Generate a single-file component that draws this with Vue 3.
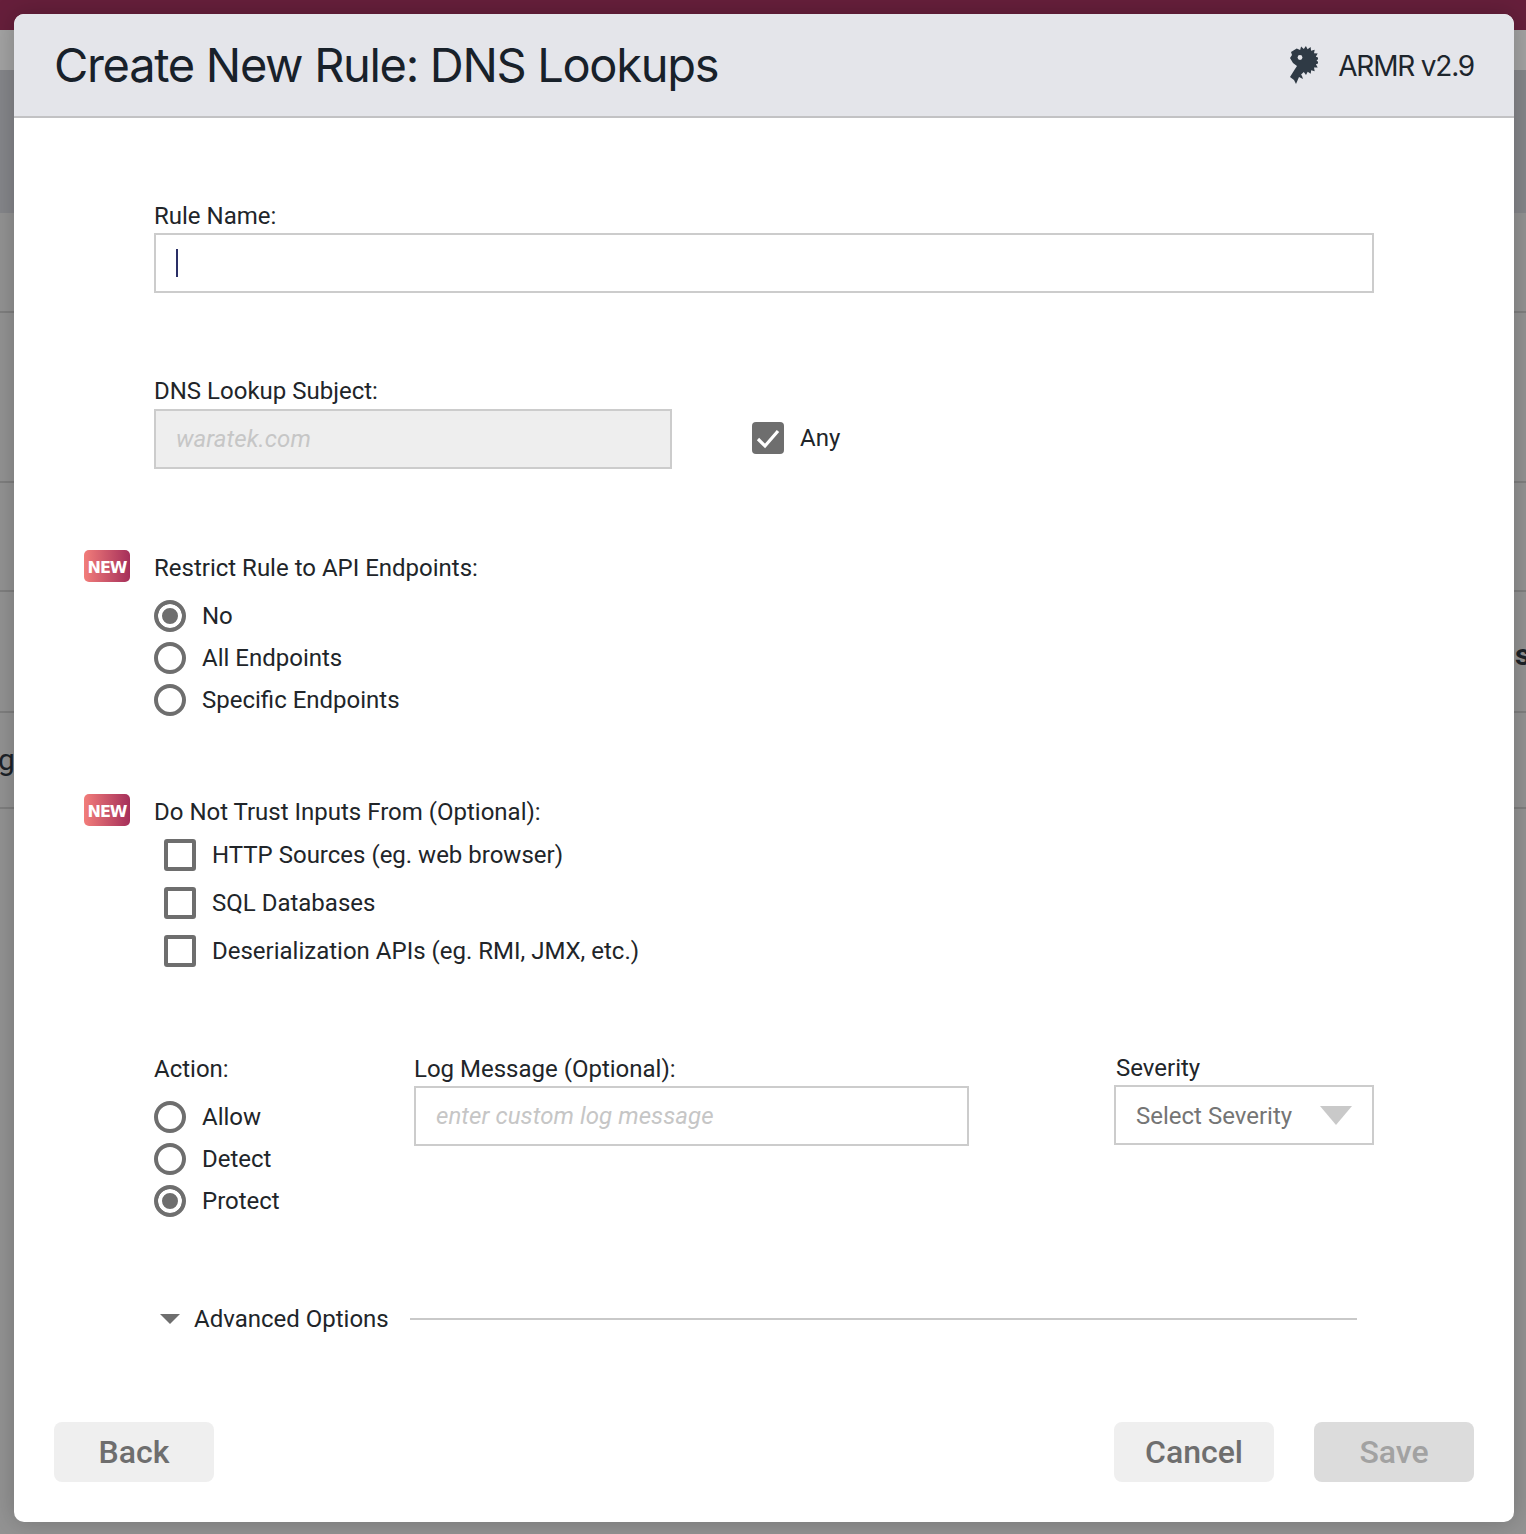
<script setup>
const endpointOptions = [
  { label: 'No', checked: true },
  { label: 'All Endpoints', checked: false },
  { label: 'Specific Endpoints', checked: false }
]
const trustOptions = [
  'HTTP Sources (eg. web browser)',
  'SQL Databases',
  'Deserialization APIs (eg. RMI, JMX, etc.)'
]
const actionOptions = [
  { label: 'Allow', checked: false },
  { label: 'Detect', checked: false },
  { label: 'Protect', checked: true }
]
const backdropLines = [311, 481, 590, 711, 807]

// jagged mane of the logo: spikes round the head, then the tail by hand
const logoPoints = []
for (let i = 0; i <= 24; i++) {
  const angle = ((-125 + i * 9.6) * Math.PI) / 180
  const r = i % 2 === 0 ? 14.5 : 11.5
  logoPoints.push([15 + r * Math.cos(angle), 14.5 + r * Math.sin(angle)])
}
const logoPath = logoPoints
  .concat([[12, 30], [13, 33], [9, 31], [6, 38], [4, 34], [0, 31], [5, 23], [7, 20], [3, 17], [0, 12], [2, 9], [1, 6]])
  .map(p => p[0].toFixed(1) + ',' + p[1].toFixed(1))
  .join(' ')
</script>

<template>
  <div class="page">
    <div class="backdrop">
      <div class="band"></div>
      <div class="strip"></div>
      <div class="strip-dark"></div>
      <div v-for="y in backdropLines" :key="y" class="backdrop-line" :style="{ top: y + 'px' }"></div>
      <span class="stray stray-g">g</span>
      <span class="stray stray-s">s</span>
    </div>

    <div class="modal">
      <header class="modal-header">
        <h1>Create New Rule: DNS Lookups</h1>
        <div class="brand">
          <svg class="logo" width="28" height="38" viewBox="0 0 28 38">
            <polygon fill="#2f3a45" :points="logoPath" />
            <circle cx="10" cy="11.5" r="2.4" fill="#e4e5ea" />
          </svg>
          <span class="version">ARMR v2.9</span>
        </div>
      </header>

      <main class="modal-body">
        <section class="rule-name">
          <label class="field-label">Rule Name:</label>
          <div class="text-field name-field"><span class="caret"></span></div>
        </section>

        <section class="subject">
          <label class="field-label">DNS Lookup Subject:</label>
          <div class="subject-row">
            <input class="text-field subject-field" disabled placeholder="waratek.com" />
            <span class="check checked">
              <svg width="32" height="32" viewBox="0 0 32 32">
                <path d="M6 17l7 7L26 9" fill="none" stroke="#fff" stroke-width="3.2" />
              </svg>
            </span>
            <span class="option-text any">Any</span>
          </div>
        </section>

        <section class="endpoints">
          <span class="new-badge">NEW</span>
          <label class="field-label">Restrict Rule to API Endpoints:</label>
          <div class="radio-list">
            <div v-for="opt in endpointOptions" :key="opt.label" class="radio-row">
              <span class="radio" :class="{ on: opt.checked }"></span>
              <span class="option-text">{{ opt.label }}</span>
            </div>
          </div>
        </section>

        <section class="trust">
          <span class="new-badge">NEW</span>
          <label class="field-label">Do Not Trust Inputs From (Optional):</label>
          <div class="check-list">
            <div v-for="opt in trustOptions" :key="opt" class="check-row">
              <span class="check"></span>
              <span class="option-text">{{ opt }}</span>
            </div>
          </div>
        </section>

        <section class="action-row">
          <div class="action-col">
            <label class="field-label">Action:</label>
            <div class="radio-list">
              <div v-for="opt in actionOptions" :key="opt.label" class="radio-row">
                <span class="radio" :class="{ on: opt.checked }"></span>
                <span class="option-text">{{ opt.label }}</span>
              </div>
            </div>
          </div>
          <div class="log-col">
            <label class="field-label">Log Message (Optional):</label>
            <input class="text-field log-field" placeholder="enter custom log message" />
          </div>
          <div class="severity-col">
            <label class="field-label">Severity</label>
            <div class="text-field select-field">
              <span class="select-text">Select Severity</span>
              <span class="select-arrow"></span>
            </div>
          </div>
        </section>

        <section class="advanced">
          <span class="advanced-arrow"></span>
          <span class="option-text">Advanced Options</span>
          <span class="advanced-line"></span>
        </section>
      </main>

      <footer class="modal-footer">
        <button class="btn">Back</button>
        <div class="footer-right">
          <button class="btn">Cancel</button>
          <button class="btn save" disabled>Save</button>
        </div>
      </footer>
    </div>
  </div>
</template>

<style scoped>
.page {
  position: relative;
  width: 1526px;
  height: 1534px;
  overflow: hidden;
  background: #8f8f8f;
  padding: 14px 12px 12px 14px;
  box-sizing: border-box;
  font-family: Roboto, "Liberation Sans", sans-serif;
  color: #212529;
}

.backdrop {
  position: absolute;
  inset: 0;
  background: #939393;
}

.band {
  height: 30px;
  background: #661f3b;
}

.strip {
  height: 40px;
  background: #a3a3a3;
}

.strip-dark {
  height: 143px;
  background: #85868a;
}

.backdrop-line {
  position: absolute;
  left: 0;
  right: 0;
  height: 2px;
  background: #7f7f7f;
}

.stray {
  position: absolute;
  font-size: 30px;
  color: #1c2228;
}

.stray-g {
  left: -2px;
  top: 742px;
}

.stray-s {
  left: 1515px;
  top: 637px;
  font-weight: 700;
}

.modal {
  position: relative;
  width: 1500px;
  height: 1508px;
  background: #fff;
  border-radius: 10px;
  overflow: hidden;
  display: flex;
  flex-direction: column;
  box-shadow: 0 0 24px rgba(0, 0, 0, 0.22);
}

.modal-header {
  box-sizing: border-box;
  height: 104px;
  flex: none;
  display: flex;
  align-items: center;
  justify-content: space-between;
  padding: 0 40px;
  background: #e4e5ea;
  border-bottom: 2px solid #c2c2c4;
}

.modal-header h1 {
  margin: 0 0 2px;
  font-family: Inter, sans-serif;
  font-size: 47px;
  font-weight: 400;
  letter-spacing: -1.32px;
  color: #18212a;
}

.brand {
  display: flex;
  align-items: center;
  gap: 20px;
  font-family: Inter, sans-serif;
  font-size: 28px;
  letter-spacing: -1.2px;
  color: #1d252d;
}

.version {
  margin-top: 2px;
}

.logo {
  display: block;
}

.modal-body {
  flex: 1;
  padding: 84px 140px 0;
  font-size: 24px;
}

.field-label {
  display: block;
  height: 28px;
  line-height: 28px;
  font-size: 24px;
  color: #212529;
}

.option-text {
  font-size: 24px;
  line-height: 28px;
  color: #212529;
  white-space: nowrap;
}

.text-field {
  display: block;
  box-sizing: border-box;
  height: 60px;
  border: 2px solid #ccc;
  background: #fff;
  padding: 0 20px;
  margin: 0;
  font-family: inherit;
  font-size: 24px;
  outline: none;
}

.text-field::placeholder {
  font-style: italic;
  letter-spacing: 0.08px;
  color: #c6c6c6;
  opacity: 1;
}

.name-field {
  width: 1220px;
  margin-top: 3px;
  display: flex;
  align-items: center;
}

.caret {
  width: 2px;
  height: 28px;
  background: #2a2f66;
}

.subject {
  margin-top: 84px;
}

.subject-row {
  margin-top: 4px;
  display: flex;
  align-items: center;
}

.subject-row .check,
.any {
  margin-bottom: 2px;
}

.subject-field {
  width: 518px;
  background: #eee;
  margin-right: 80px;
}

.check {
  flex: none;
  display: block;
  box-sizing: border-box;
  width: 32px;
  height: 32px;
  border: 4px solid #6e6e6e;
  border-radius: 3px;
}

.check.checked {
  border: none;
  border-radius: 4px;
  background: #6e6e6e;
}

.any {
  margin-left: 16px;
}

.endpoints,
.trust {
  position: relative;
}

.endpoints {
  margin-top: 85px;
}

.new-badge {
  position: absolute;
  left: -70px;
  top: -4px;
  width: 46px;
  height: 32px;
  border-radius: 5px;
  background: linear-gradient(90deg, #f27d7a, #a52f5a);
  color: #fff;
  font-family: "DejaVu Sans", sans-serif;
  font-size: 16px;
  font-weight: 700;
  line-height: 36px;
  text-align: center;
  letter-spacing: -1px;
}

.radio-list {
  margin-top: 18px;
  display: flex;
  flex-direction: column;
  gap: 10px;
}

.radio-row {
  display: flex;
  align-items: center;
  gap: 16px;
  height: 32px;
}

.radio {
  flex: none;
  box-sizing: border-box;
  width: 32px;
  height: 32px;
  border: 4px solid #6e6e6e;
  border-radius: 50%;
  background: #fff;
}

.radio.on {
  background: #6e6e6e;
  box-shadow: inset 0 0 0 4px #fff;
}

.trust {
  margin-top: 82px;
}

.check-list {
  margin-top: 13px;
  padding-left: 10px;
  display: flex;
  flex-direction: column;
  gap: 16px;
}

.check-row {
  display: flex;
  align-items: center;
  gap: 16px;
  height: 32px;
}

.action-row {
  margin-top: 88px;
  display: flex;
  align-items: flex-start;
}

.action-col {
  width: 260px;
  flex: none;
}

.log-col {
  width: 555px;
  flex: none;
}

.log-col .field-label {
  margin-bottom: 3px;
}

.log-field {
  width: 555px;
}

.severity-col {
  margin-left: 145px;
  margin-top: -1px;
  width: 260px;
}

.severity-col .field-label {
  padding-left: 2px;
  margin-bottom: 3px;
}

.select-field {
  width: 260px;
  display: flex;
  align-items: center;
  justify-content: space-between;
  color: #757575;
}

.select-text {
  margin-top: 2px;
}

.select-arrow {
  width: 0;
  height: 0;
  border-left: 16px solid transparent;
  border-right: 16px solid transparent;
  border-top: 19px solid #c9c9c9;
}

.advanced {
  margin-top: 88px;
  padding-left: 6px;
  display: flex;
  align-items: center;
  height: 28px;
  width: 1197px;
}

.advanced-arrow {
  width: 0;
  height: 0;
  margin-right: 14px;
  border-left: 10px solid transparent;
  border-right: 10px solid transparent;
  border-top: 10px solid #6e6e6e;
}

.advanced-line {
  flex: 1;
  height: 2px;
  margin-left: 21px;
  background: #c9c9c9;
}

.modal-footer {
  flex: none;
  display: flex;
  justify-content: space-between;
  padding: 0 40px 40px;
}

.footer-right {
  display: flex;
  gap: 40px;
}

.btn {
  width: 160px;
  height: 60px;
  border: none;
  border-radius: 8px;
  background: #efefef;
  color: #6e6e6e;
  font-family: Roboto, sans-serif;
  font-size: 32px;
  font-weight: 500;
  padding: 0;
}

.save {
  background: #dcdcdc;
  color: #a2a2a2;
}
</style>
